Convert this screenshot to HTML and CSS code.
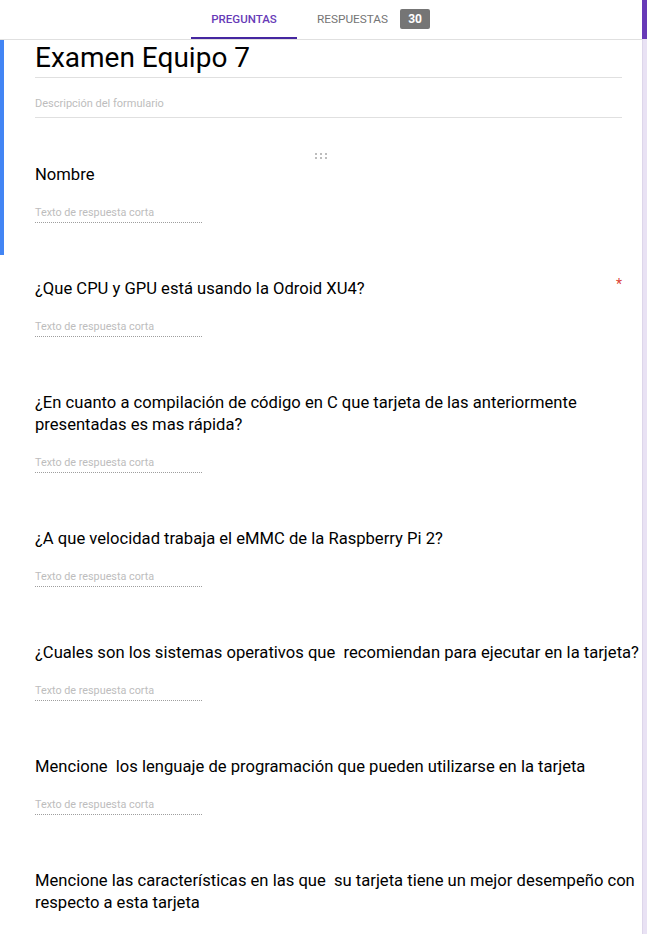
FILE: index.html
```html
<!DOCTYPE html>
<html lang="es">
<head>
<meta charset="utf-8">
<title>Examen Equipo 7</title>
<link rel="stylesheet" href="styles.css">
</head>
<body>
<div class="page">
  <div class="main">
    <nav class="tabs">
      <div class="tab tab-active">PREGUNTAS</div>
      <div class="tab tab-other">RESPUESTAS <span class="badge">30</span></div>
    </nav>
    <section class="card-active">
      <div class="form-head">
        <div class="form-title">Examen Equipo 7</div>
        <div class="form-desc">Descripción del formulario</div>
      </div>
      <div class="item item-first">
        <div class="handle">
          <svg width="12" height="6" viewBox="0 0 12 6"><g fill="#bdbdbd"><rect x="0" y="0" width="2" height="2"/><rect x="5" y="0" width="2" height="2"/><rect x="10" y="0" width="2" height="2"/><rect x="0" y="4" width="2" height="2"/><rect x="5" y="4" width="2" height="2"/><rect x="10" y="4" width="2" height="2"/></g></svg>
        </div>
        <div class="q">Nombre</div>
        <div class="answer">Texto de respuesta corta</div>
      </div>
    </section>
    <div class="item">
      <span class="req">*</span>
      <div class="q">¿Que CPU y GPU está usando la Odroid XU4?</div>
      <div class="answer">Texto de respuesta corta</div>
    </div>
    <div class="item">
      <div class="q">¿En cuanto a compilación de código en C que tarjeta de las anteriormente presentadas es mas rápida?</div>
      <div class="answer">Texto de respuesta corta</div>
    </div>
    <div class="item">
      <div class="q">¿A que velocidad trabaja el eMMC de la Raspberry Pi 2?</div>
      <div class="answer">Texto de respuesta corta</div>
    </div>
    <div class="item">
      <div class="q">¿Cuales son los sistemas operativos que  recomiendan para ejecutar en la tarjeta?</div>
      <div class="answer">Texto de respuesta corta</div>
    </div>
    <div class="item">
      <div class="q">Mencione  los lenguaje de programación que pueden utilizarse en la tarjeta</div>
      <div class="answer">Texto de respuesta corta</div>
    </div>
    <div class="item">
      <div class="q">Mencione las características en las que  su tarjeta tiene un mejor desempeño con respecto a esta tarjeta</div>
    </div>
  </div>
  <div class="strip">
    <div class="strip-top"></div>
    <div class="strip-rest"></div>
  </div>
</div>
</body>
</html>
```

FILE: styles.css
```css
html, body {
  margin: 0;
  padding: 0;
  background: #fff;
}
body {
  font-family: Roboto, "Liberation Sans", sans-serif;
  color: #212121;
  overflow: hidden;
}
.page {
  display: flex;
  width: 647px;
  height: 934px;
  overflow: hidden;
}
.main {
  width: 642px;
  flex: none;
}
.strip {
  width: 5px;
  display: flex;
  flex-direction: column;
}
.strip-top {
  height: 39px;
  background: #673ab7;
}
.strip-rest {
  flex: 1;
  background: #e9e2f4;
  border-left: 1px solid #ddd6ea;
}
.tabs {
  border-bottom: 1px solid #e0e0e0;
  display: flex;
  padding-left: 191px;
  box-sizing: border-box;
  height: 40px;
}
.tab {
  font-size: 11.5px;
  font-weight: 500;
  display: flex;
  align-items: center;
  height: 37px;
}
.tab-active {
  width: 106px;
  justify-content: center;
  color: #673ab7;
  border-bottom: 2px solid #4527a0;
}
.tab-other {
  color: #757575;
  padding-left: 20px;
  font-size: 11.8px;
  font-weight: 400;
  align-items: flex-start;
  padding-top: 12px;
  box-sizing: border-box;
}
.badge {
  display: inline-block;
  margin-left: 12px;
  margin-top: -3px;
  width: 30px;
  height: 20px;
  line-height: 20px;
  text-align: center;
  background: #757575;
  color: #fff;
  font-weight: 700;
  font-size: 12px;
  border-radius: 2px;
}
.card-active {
  border-left: 4px solid #4285f4;
}
.form-head {
  padding-left: 31px;
  padding-right: 20px;
}
.form-title {
  font-size: 28px;
  line-height: 36px;
  color: #000;
  border-bottom: 1px solid #e0e0e0;
  padding-bottom: 1px;
}
.form-desc {
  margin-top: 18px;
  font-size: 11px;
  line-height: 16px;
  color: #bdbdbd;
  padding-bottom: 5px;
  border-bottom: 1px solid #e0e0e0;
}
.item {
  position: relative;
  padding: 23px 0 32px 35px;
}
.card-active .item {
  padding-left: 31px;
}
.item-first {
  padding-top: 35px;
}
.handle {
  display: flex;
  height: 6px;
  margin-bottom: 5px;
  padding-left: 280px;
}
.handle svg {
  display: block;
}
.q {
  font-size: 16.6px;
  line-height: 22px;
  color: #000;
  white-space: pre-wrap;
  margin-right: -5px;
}
.answer {
  margin-top: 20px;
  width: 167px;
  font-size: 10.8px;
  line-height: 14px;
  color: #bdbdbd;
  padding-bottom: 2px;
  border-bottom: 1px dotted #9e9e9e;
}
.req {
  position: absolute;
  right: 20px;
  top: 21px;
  color: #db4437;
  font-size: 14px;
}
```
